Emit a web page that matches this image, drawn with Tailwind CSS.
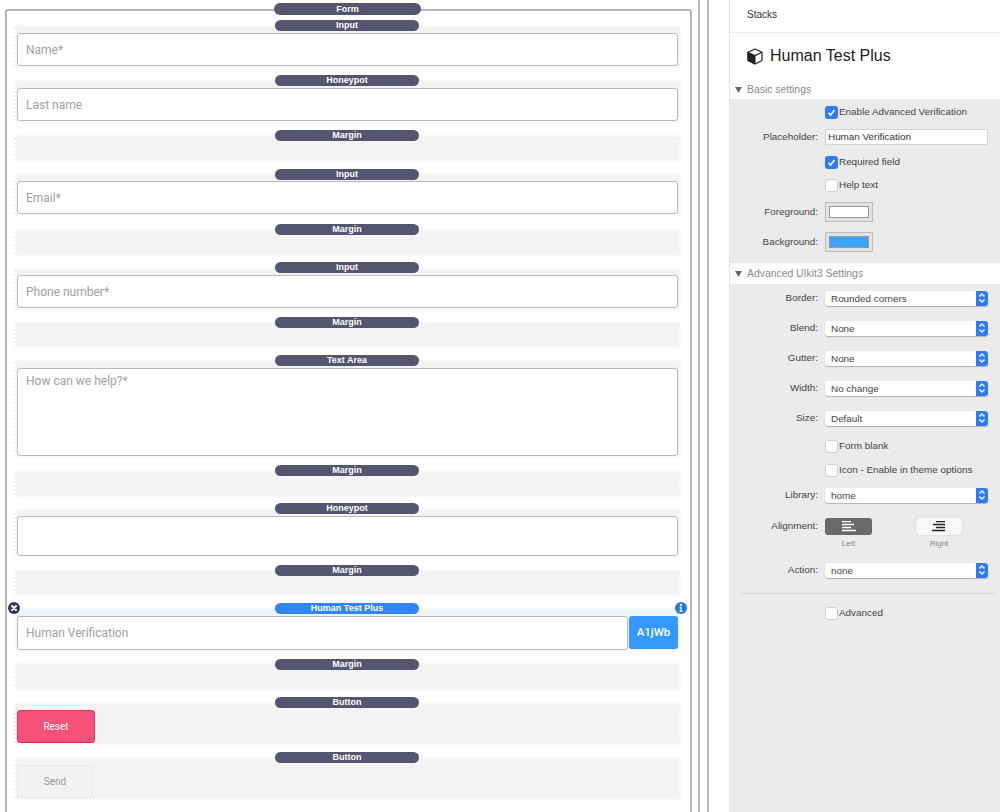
<!DOCTYPE html>
<html>
<head>
<meta charset="utf-8">
<script src="https://cdn.jsdelivr.net/npm/@tailwindcss/browser@4"></script>
</head>
<body class="m-0 bg-white">
<div class="flex w-[1000px] h-[812px] overflow-hidden font-['Roboto',sans-serif]">

  <!-- Canvas -->
  <div class="relative w-[729px] shrink-0 h-full">
    <div class="absolute left-[698px] top-0 h-full w-[2px] bg-[#b9b9c2]"></div>
    <div class="absolute left-[707px] top-0 h-full w-[2px] bg-[#b9b9c2]"></div>
    <div class="ml-[5px] mt-[9px] w-[687px] h-[803px] border-2 border-b-0 border-[#b4b4bc] rounded-t-[3px] relative">
      <div class="absolute left-[267px] top-[-8px] w-[147px] h-[12px] rounded-full bg-[#55556f] text-white text-[9px] leading-[12px] font-bold text-center font-['Liberation_Sans',sans-serif]">Form</div>
      <div class="flex flex-col pl-[7px] pt-[14px]">

        <div class="relative w-[667px] h-[43px] bg-[#f3f3f3] border-2 border-dotted border-white pl-px pt-[6px]">
          <div class="absolute left-[259px] top-[-7px] w-[144px] h-[11px] rounded-full bg-[#55556f] text-white text-[9px] leading-[11px] font-bold text-center font-['Liberation_Sans',sans-serif]">Input</div>
          <div class="w-[661px] h-[33px] bg-white border border-[#bbbbbb] rounded-[3px] pl-[8px] text-[12px] leading-[33px] text-[#a0a0a0]">Name*</div>
        </div>

        <div class="relative mt-[12px] w-[667px] h-[43px] bg-[#f3f3f3] border-2 border-dotted border-white pl-px pt-[6px]">
          <div class="absolute left-[259px] top-[-7px] w-[144px] h-[11px] rounded-full bg-[#55556f] text-white text-[9px] leading-[11px] font-bold text-center font-['Liberation_Sans',sans-serif]">Honeypot</div>
          <div class="w-[661px] h-[33px] bg-white border border-[#bbbbbb] rounded-[3px] pl-[8px] text-[12px] leading-[33px] text-[#a0a0a0]">Last name</div>
        </div>

        <div class="relative mt-[12px] w-[667px] h-[27px] bg-[#f3f3f3] border-2 border-dotted border-white">
          <div class="absolute left-[259px] top-[-7px] w-[144px] h-[11px] rounded-full bg-[#55556f] text-white text-[9px] leading-[11px] font-bold text-center font-['Liberation_Sans',sans-serif]">Margin</div>
        </div>

        <div class="relative mt-[11px] w-[667px] h-[43px] bg-[#f3f3f3] border-2 border-dotted border-white pl-px pt-[6px]">
          <div class="absolute left-[259px] top-[-6px] w-[144px] h-[11px] rounded-full bg-[#55556f] text-white text-[9px] leading-[11px] font-bold text-center font-['Liberation_Sans',sans-serif]">Input</div>
          <div class="w-[661px] h-[33px] bg-white border border-[#bbbbbb] rounded-[3px] pl-[8px] text-[12px] leading-[33px] text-[#a0a0a0]">Email*</div>
        </div>

        <div class="relative mt-[13px] w-[667px] h-[27px] bg-[#f3f3f3] border-2 border-dotted border-white">
          <div class="absolute left-[259px] top-[-7px] w-[144px] h-[11px] rounded-full bg-[#55556f] text-white text-[9px] leading-[11px] font-bold text-center font-['Liberation_Sans',sans-serif]">Margin</div>
        </div>

        <div class="relative mt-[11px] w-[667px] h-[43px] bg-[#f3f3f3] border-2 border-dotted border-white pl-px pt-[6px]">
          <div class="absolute left-[259px] top-[-7px] w-[144px] h-[11px] rounded-full bg-[#55556f] text-white text-[9px] leading-[11px] font-bold text-center font-['Liberation_Sans',sans-serif]">Input</div>
          <div class="w-[661px] h-[33px] bg-white border border-[#bbbbbb] rounded-[3px] pl-[8px] text-[12px] leading-[33px] text-[#a0a0a0]">Phone number*</div>
        </div>

        <div class="relative mt-[12px] w-[667px] h-[27px] bg-[#f3f3f3] border-2 border-dotted border-white">
          <div class="absolute left-[259px] top-[-7px] w-[144px] h-[11px] rounded-full bg-[#55556f] text-white text-[9px] leading-[11px] font-bold text-center font-['Liberation_Sans',sans-serif]">Margin</div>
        </div>

        <div class="relative mt-[11px] w-[667px] h-[98px] bg-[#f3f3f3] border-2 border-dotted border-white pl-px pt-[6px]">
          <div class="absolute left-[259px] top-[-7px] w-[144px] h-[11px] rounded-full bg-[#55556f] text-white text-[9px] leading-[11px] font-bold text-center font-['Liberation_Sans',sans-serif]">Text Area</div>
          <div class="w-[661px] h-[88px] bg-white border border-[#bbbbbb] rounded-[3px] pl-[8px] pt-[3px] text-[12px] leading-[18px] text-[#a0a0a0]">How can we help?*</div>
        </div>

        <div class="relative mt-[12px] w-[667px] h-[27px] bg-[#f3f3f3] border-2 border-dotted border-white">
          <div class="absolute left-[259px] top-[-7px] w-[144px] h-[11px] rounded-full bg-[#55556f] text-white text-[9px] leading-[11px] font-bold text-center font-['Liberation_Sans',sans-serif]">Margin</div>
        </div>

        <div class="relative mt-[11px] w-[667px] h-[49px] bg-[#f3f3f3] border-2 border-dotted border-white pl-px pt-[6px]">
          <div class="absolute left-[259px] top-[-7px] w-[144px] h-[11px] rounded-full bg-[#55556f] text-white text-[9px] leading-[11px] font-bold text-center font-['Liberation_Sans',sans-serif]">Honeypot</div>
          <div class="w-[661px] h-[40px] bg-white border border-[#bbbbbb] rounded-[3px]"></div>
        </div>

        <div class="relative mt-[13px] w-[667px] h-[27px] bg-[#f3f3f3] border-2 border-dotted border-white">
          <div class="absolute left-[259px] top-[-7px] w-[144px] h-[11px] rounded-full bg-[#55556f] text-white text-[9px] leading-[11px] font-bold text-center font-['Liberation_Sans',sans-serif]">Margin</div>
        </div>

        <div class="relative mt-[11px] w-[667px] h-[44px] bg-[#eef5fd] border-2 border-dotted border-white pl-px pt-[6px] flex items-start gap-px">
          <div class="absolute left-[259px] top-[-7px] w-[144px] h-[11px] rounded-full bg-[#2f86f2] text-white text-[9px] leading-[11px] font-bold text-center font-['Liberation_Sans',sans-serif]">Human Test Plus</div>
          <svg class="absolute left-[-8px] top-[-8px] w-[12px] h-[12px]" viewBox="0 0 12 12"><circle cx="6" cy="6" r="6" fill="#36365a"/><path d="M4 4l4 4M8 4l-4 4" stroke="#fff" stroke-width="2" stroke-linecap="round"/></svg>
          <svg class="absolute left-[659px] top-[-8px] w-[12px] h-[12px]" viewBox="0 0 12 12"><circle cx="6" cy="6" r="6" fill="#1f78ea"/><circle cx="6" cy="3" r="1.2" fill="#fff"/><path d="M4.7 5h2v3.6h.9V10H4.5V8.6h.9V6.3h-.7z" fill="#fff"/></svg>
          <div class="w-[611px] h-[34px] bg-white border border-[#b4b8c4] rounded-[3px] pl-[8px] text-[12px] leading-[33px] text-[#a0a0a0]">Human Verification</div>
          <div class="w-[49px] h-[33px] bg-[#3399ff] rounded-[3px] text-white text-[11.5px] leading-[33px] text-center font-medium">A1jWb</div>
        </div>

        <div class="relative mt-[11px] w-[667px] h-[28px] bg-[#f3f3f3] border-2 border-dotted border-white">
          <div class="absolute left-[259px] top-[-6px] w-[144px] h-[11px] rounded-full bg-[#55556f] text-white text-[9px] leading-[11px] font-bold text-center font-['Liberation_Sans',sans-serif]">Margin</div>
        </div>

        <div class="relative mt-[11px] w-[667px] h-[43px] bg-[#f3f3f3] border-2 border-dotted border-white pl-px pt-[6px]">
          <div class="absolute left-[259px] top-[-7px] w-[144px] h-[11px] rounded-full bg-[#55556f] text-white text-[9px] leading-[11px] font-bold text-center font-['Liberation_Sans',sans-serif]">Button</div>
          <div class="w-[78px] h-[33px] bg-[#f5527a] border border-[#e8305f] rounded-[3px] text-white text-[10px] leading-[31px] text-center">Reset</div>
        </div>

        <div class="relative mt-[12px] w-[667px] h-[43px] bg-[#f3f3f3] border-2 border-dotted border-white pl-px pt-[6px]">
          <div class="absolute left-[259px] top-[-7px] w-[144px] h-[11px] rounded-full bg-[#55556f] text-white text-[9px] leading-[11px] font-bold text-center font-['Liberation_Sans',sans-serif]">Button</div>
          <div class="w-[76px] h-[33px] bg-[#f2f2f2] border border-[#e6e6e6] rounded-[3px] text-[#999999] text-[10px] leading-[31px] text-center">Send</div>
        </div>
      </div>
    </div>
  </div>

  <!-- Sidebar -->
  <div class="w-[271px] shrink-0 h-full border-l border-[#e4e4e4] text-[9.9px] text-[#444444] font-['Liberation_Sans',sans-serif]">
    <div class="h-[33px] border-b border-[#ececec] pl-[17px] text-[10px] leading-[29px] text-[#333333]">Stacks</div>
    <div class="h-[46px] flex items-center pl-[17px] gap-[7px]">
      <svg class="w-[16px] h-[17px]" viewBox="0 0 16 17"><path d="M8 1L15 4.2V12.5L8 16L1 12.5V4.2Z" fill="#fff" stroke="#222" stroke-width="1.2" stroke-linejoin="round"/><path d="M1 4.2L8 7.6V16L1 12.5Z" fill="#222" stroke="#222" stroke-width="1"/><path d="M8 7.6L15 4.2" stroke="#222" stroke-width="1.2"/></svg>
      <span class="text-[16px] leading-[20px] tracking-normal text-[#222222]">Human Test Plus</span>
    </div>
    <div class="h-[20px] flex items-center pl-[5px] gap-[5px] text-[#8a8a8a] text-[10.4px] pt-px">
      <svg class="w-[7px] h-[6px]" viewBox="0 0 7 6"><path d="M0 0H7L3.5 6Z" fill="#666"/></svg>
      <span>Basic settings</span>
    </div>
    <div class="h-[164px] bg-[#ebebeb]">
      <div class="h-[26px] flex items-center pl-[95px]">
        <span class="w-[13px] h-[13px] rounded-[3px] bg-[#2f7bf6] flex items-center justify-center"><svg class="w-[9px] h-[9px]" viewBox="0 0 9 9"><path d="M1.5 4.8L3.6 7L7.5 2" fill="none" stroke="#fff" stroke-width="1.5"/></svg></span>
        <span class="ml-[1px]">Enable Advanced Verification</span>
      </div>
      <div class="h-[24px] flex items-center">
        <span class="w-[88px] text-right">Placeholder:</span>
        <div class="ml-[7px] w-[163px] h-[16px] bg-white border border-[#d4d4d4] pl-[2px] leading-[14px] text-[#333333]">Human Verification</div>
      </div>
      <div class="h-[26px] flex items-center pl-[95px]">
        <span class="w-[13px] h-[13px] rounded-[3px] bg-[#2f7bf6] flex items-center justify-center"><svg class="w-[9px] h-[9px]" viewBox="0 0 9 9"><path d="M1.5 4.8L3.6 7L7.5 2" fill="none" stroke="#fff" stroke-width="1.5"/></svg></span>
        <span class="ml-[1px]">Required field</span>
      </div>
      <div class="h-[20px] flex items-center pl-[95px]">
        <span class="w-[13px] h-[13px] rounded-[3px] bg-white border border-[#cfcfcf]"></span>
        <span class="ml-[1px]">Help text</span>
      </div>
      <div class="h-[34px] flex items-center">
        <span class="w-[88px] text-right">Foreground:</span>
        <div class="ml-[7px] w-[48px] h-[20px] border border-[#bdbdbd] bg-[#e2e2e2] p-[3px]"><div class="w-full h-full bg-white border border-[#9a9a9a]"></div></div>
      </div>
      <div class="h-[26px] flex items-center">
        <span class="w-[88px] text-right">Background:</span>
        <div class="ml-[7px] w-[48px] h-[20px] border border-[#bdbdbd] bg-[#e2e2e2] p-[3px]"><div class="w-full h-full bg-[#3aa2ff] border border-[#9a9a9a]"></div></div>
      </div>
    </div>
    <div class="h-[21px] flex items-center pl-[5px] gap-[5px] text-[#8a8a8a] text-[10.4px] pt-px">
      <svg class="w-[7px] h-[6px]" viewBox="0 0 7 6"><path d="M0 0H7L3.5 6Z" fill="#666"/></svg>
      <span>Advanced UIkit3 Settings</span>
    </div>
    <div class="h-[528px] bg-[#ebebeb]">
      <div class="h-[28px] flex items-center">
        <span class="w-[88px] text-right">Border:</span>
        <div class="ml-[7px] w-[163px] h-[15px] flex bg-white rounded-[3px] shadow-[0_1px_1px_rgba(0,0,0,0.25)] overflow-hidden">
          <span class="flex-1 pl-[6px] leading-[15px]">Rounded corners</span>
          <span class="w-[12px] bg-[#2f7bf6] flex items-center justify-center"><svg class="w-[8px] h-[12px]" viewBox="0 0 8 12"><path d="M1.5 4.5L4 2L6.5 4.5M1.5 7.5L4 10L6.5 7.5" fill="none" stroke="#fff" stroke-width="1.3"/></svg></span>
        </div>
      </div>
      <div class="h-[32px] flex items-center">
        <span class="w-[88px] text-right">Blend:</span>
        <div class="ml-[7px] w-[163px] h-[15px] flex bg-white rounded-[3px] shadow-[0_1px_1px_rgba(0,0,0,0.25)] overflow-hidden">
          <span class="flex-1 pl-[6px] leading-[15px]">None</span>
          <span class="w-[12px] bg-[#2f7bf6] flex items-center justify-center"><svg class="w-[8px] h-[12px]" viewBox="0 0 8 12"><path d="M1.5 4.5L4 2L6.5 4.5M1.5 7.5L4 10L6.5 7.5" fill="none" stroke="#fff" stroke-width="1.3"/></svg></span>
        </div>
      </div>
      <div class="h-[28px] flex items-center">
        <span class="w-[88px] text-right">Gutter:</span>
        <div class="ml-[7px] w-[163px] h-[15px] flex bg-white rounded-[3px] shadow-[0_1px_1px_rgba(0,0,0,0.25)] overflow-hidden">
          <span class="flex-1 pl-[6px] leading-[15px]">None</span>
          <span class="w-[12px] bg-[#2f7bf6] flex items-center justify-center"><svg class="w-[8px] h-[12px]" viewBox="0 0 8 12"><path d="M1.5 4.5L4 2L6.5 4.5M1.5 7.5L4 10L6.5 7.5" fill="none" stroke="#fff" stroke-width="1.3"/></svg></span>
        </div>
      </div>
      <div class="h-[32px] flex items-center">
        <span class="w-[88px] text-right">Width:</span>
        <div class="ml-[7px] w-[163px] h-[15px] flex bg-white rounded-[3px] shadow-[0_1px_1px_rgba(0,0,0,0.25)] overflow-hidden">
          <span class="flex-1 pl-[6px] leading-[15px]">No change</span>
          <span class="w-[12px] bg-[#2f7bf6] flex items-center justify-center"><svg class="w-[8px] h-[12px]" viewBox="0 0 8 12"><path d="M1.5 4.5L4 2L6.5 4.5M1.5 7.5L4 10L6.5 7.5" fill="none" stroke="#fff" stroke-width="1.3"/></svg></span>
        </div>
      </div>
      <div class="h-[28px] flex items-center">
        <span class="w-[88px] text-right">Size:</span>
        <div class="ml-[7px] w-[163px] h-[15px] flex bg-white rounded-[3px] shadow-[0_1px_1px_rgba(0,0,0,0.25)] overflow-hidden">
          <span class="flex-1 pl-[6px] leading-[15px]">Default</span>
          <span class="w-[12px] bg-[#2f7bf6] flex items-center justify-center"><svg class="w-[8px] h-[12px]" viewBox="0 0 8 12"><path d="M1.5 4.5L4 2L6.5 4.5M1.5 7.5L4 10L6.5 7.5" fill="none" stroke="#fff" stroke-width="1.3"/></svg></span>
        </div>
      </div>
      <div class="h-[29px] flex items-center pl-[95px]">
        <span class="w-[13px] h-[13px] rounded-[3px] bg-white border border-[#cfcfcf]"></span>
        <span class="ml-[1px]">Form blank</span>
      </div>
      <div class="h-[18px] flex items-center pl-[95px]">
        <span class="w-[13px] h-[13px] rounded-[3px] bg-white border border-[#cfcfcf]"></span>
        <span class="ml-[1px]">Icon - Enable in theme options</span>
      </div>
      <div class="h-[32px] flex items-center">
        <span class="w-[88px] text-right">Library:</span>
        <div class="ml-[7px] w-[163px] h-[15px] flex bg-white rounded-[3px] shadow-[0_1px_1px_rgba(0,0,0,0.25)] overflow-hidden">
          <span class="flex-1 pl-[6px] leading-[15px]">home</span>
          <span class="w-[12px] bg-[#2f7bf6] flex items-center justify-center"><svg class="w-[8px] h-[12px]" viewBox="0 0 8 12"><path d="M1.5 4.5L4 2L6.5 4.5M1.5 7.5L4 10L6.5 7.5" fill="none" stroke="#fff" stroke-width="1.3"/></svg></span>
        </div>
      </div>
      <div class="mt-[3px] h-[24px] flex items-center">
        <span class="w-[88px] text-right">Alignment:</span>
        <div class="ml-[7px] w-[47px] h-[17px] bg-[#6a6a6a] rounded-[3px] flex items-center justify-center"><svg class="w-[14px] h-[11px]" viewBox="0 0 14 11"><path d="M0 .5H9M0 3.5H12M0 6.5H9M0 9.5H14" stroke="#fff" stroke-width="1.6"/></svg></div>
        <div class="ml-[44px] w-[46px] h-[17px] bg-[#f8f8f8] rounded-[3px] shadow-[0_0_1px_rgba(0,0,0,0.35)] flex items-center justify-center"><svg class="w-[14px] h-[11px]" viewBox="0 0 14 11"><path d="M4 .5H13M1 3.5H13M4 6.5H13M0 9.5H13" stroke="#222" stroke-width="1.4"/></svg></div>
      </div>
      <div class="h-[12px] flex items-center text-[8px] text-[#888888]">
        <span class="ml-[95px] w-[47px] text-center">Left</span>
        <span class="ml-[44px] w-[46px] text-center">Right</span>
      </div>
      <div class="h-[40px] flex items-center">
        <span class="w-[88px] text-right">Action:</span>
        <div class="ml-[7px] w-[163px] h-[15px] flex bg-white rounded-[3px] shadow-[0_1px_1px_rgba(0,0,0,0.25)] overflow-hidden">
          <span class="flex-1 pl-[6px] leading-[15px]">none</span>
          <span class="w-[12px] bg-[#2f7bf6] flex items-center justify-center"><svg class="w-[8px] h-[12px]" viewBox="0 0 8 12"><path d="M1.5 4.5L4 2L6.5 4.5M1.5 7.5L4 10L6.5 7.5" fill="none" stroke="#fff" stroke-width="1.3"/></svg></span>
        </div>
      </div>
      <div class="mt-[3px] ml-[10px] w-[255px] h-px bg-[#d6d6d6]"></div>
      <div class="h-[38px] flex items-center pl-[95px]">
        <span class="w-[13px] h-[13px] rounded-[3px] bg-white border border-[#cfcfcf]"></span>
        <span class="ml-[1px]">Advanced</span>
      </div>
    </div>
  </div>
</div>
</body>
</html>
